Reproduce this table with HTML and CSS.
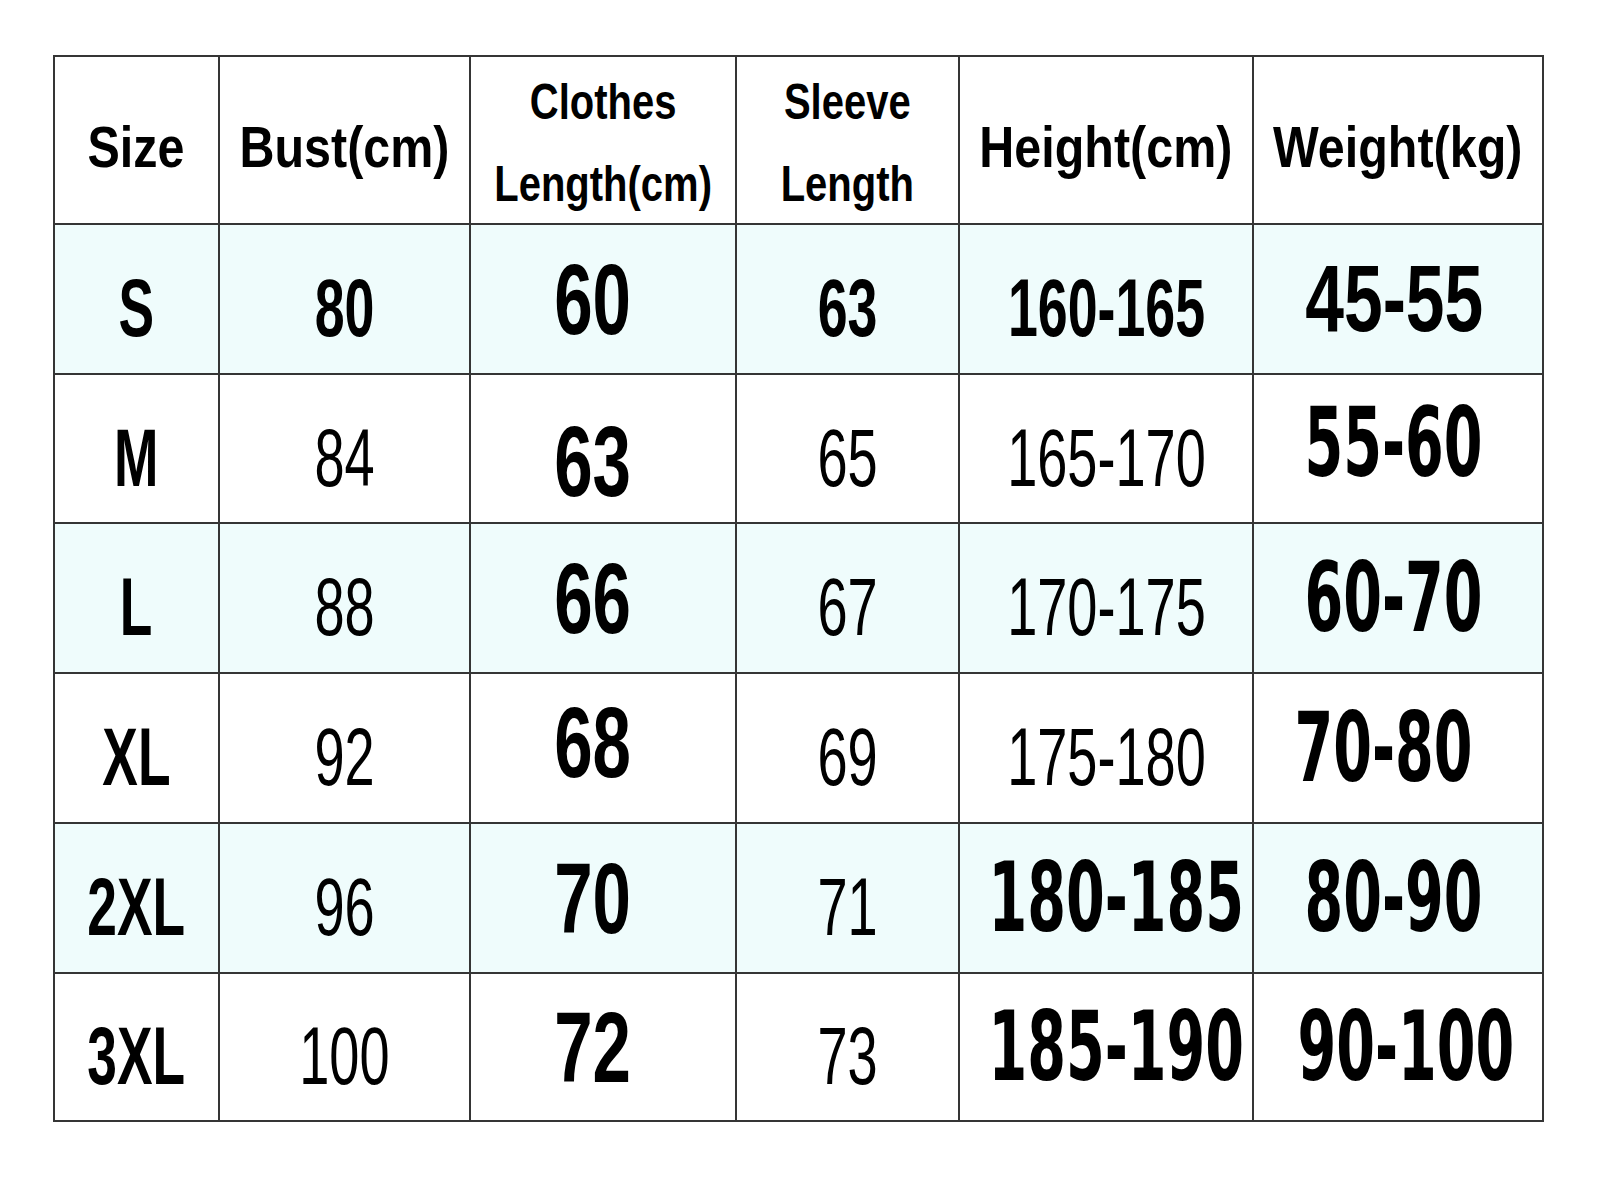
FILE: index.html
```html
<!DOCTYPE html>
<html>
<head>
<meta charset="utf-8">
<link rel="stylesheet" href="styles.css">
</head>
<body>
<div class="page">
  <div class="chart">
    <div class="cell head"><span class="h1">Size</span></div>
    <div class="cell head"><span class="h1">Bust(cm)</span></div>
    <div class="cell head2"><span class="h2">Clothes<br>Length(cm)</span></div>
    <div class="cell head2"><span class="h2">Sleeve<br>Length</span></div>
    <div class="cell head"><span class="h1">Height(cm)</span></div>
    <div class="cell head"><span class="h1">Weight(kg)</span></div>

    <div class="cell alt low"><span class="sz">S</span></div>
    <div class="cell alt low"><span class="nb">80</span></div>
    <div class="cell alt cl"><span class="big">60</span></div>
    <div class="cell alt low"><span class="nb">63</span></div>
    <div class="cell alt low"><span class="nb">160-165</span></div>
    <div class="cell alt wl"><span class="big w1">45-55</span></div>

    <div class="cell low"><span class="sz">M</span></div>
    <div class="cell low"><span class="nr">84</span></div>
    <div class="cell cl low2"><span class="big">63</span></div>
    <div class="cell low"><span class="nr">65</span></div>
    <div class="cell low"><span class="nr">165-170</span></div>
    <div class="cell up wl"><span class="dv">55-60</span></div>

    <div class="cell alt low"><span class="sz">L</span></div>
    <div class="cell alt low"><span class="nr">88</span></div>
    <div class="cell alt cl"><span class="big">66</span></div>
    <div class="cell alt low"><span class="nr">67</span></div>
    <div class="cell alt low"><span class="nr">170-175</span></div>
    <div class="cell alt wl"><span class="dv">60-70</span></div>

    <div class="cell low"><span class="sz">XL</span></div>
    <div class="cell low"><span class="nr">92</span></div>
    <div class="cell cl up"><span class="big">68</span></div>
    <div class="cell low"><span class="nr">69</span></div>
    <div class="cell low"><span class="nr">175-180</span></div>
    <div class="cell wl2"><span class="dv">70-80</span></div>

    <div class="cell alt low"><span class="sz">2XL</span></div>
    <div class="cell alt low"><span class="nr">96</span></div>
    <div class="cell alt cl"><span class="big">70</span></div>
    <div class="cell alt low"><span class="nr">71</span></div>
    <div class="cell alt"><span class="dv shift">180-185</span></div>
    <div class="cell alt wl"><span class="dv">80-90</span></div>

    <div class="cell low"><span class="sz">3XL</span></div>
    <div class="cell low"><span class="nr">100</span></div>
    <div class="cell cl"><span class="big">72</span></div>
    <div class="cell low"><span class="nr">73</span></div>
    <div class="cell"><span class="dv shift">185-190</span></div>
    <div class="cell wr"><span class="dv">90-100</span></div>
  </div>
</div>
</body>
</html>
```

FILE: styles.css
```css
html, body {
  margin: 0;
  padding: 0;
  background: #ffffff;
}

body {
  font-family: "Liberation Sans", Arial, sans-serif;
  color: #000;
}

.page {
  padding: 55px 0 0 53px;
}

.chart {
  display: grid;
  grid-template-columns: 165px 251px 266px 223px 294px 290px;
  grid-template-rows: 168px 150px 149px 150px 150px 150px 148px;
  width: max-content;
  border-left: 2px solid #353535;
  border-top: 2px solid #353535;
}

.cell {
  box-sizing: border-box;
  border-right: 2px solid #353535;
  border-bottom: 2px solid #353535;
  display: flex;
  align-items: center;
  justify-content: center;
  background: #ffffff;
  overflow: visible;
}

.cell.alt {
  background: #effcfc;
}

.cell.head {
  padding-top: 14px;
}

.cell.head2 {
  padding-top: 6px;
}

.cell.low {
  padding-top: 18px;
}

.cell.low2 {
  padding-top: 24px;
}

.cell.up {
  padding-bottom: 12px;
}

.cell.cl {
  padding-right: 20px;
}

.cell.wl {
  padding-right: 8px;
}

.cell.wl2 {
  padding-right: 28px;
}

.cell.wr {
  padding-left: 16px;
}

.cell span {
  display: inline-block;
  white-space: nowrap;
  line-height: 1;
  transform-origin: center center;
}

.h1 {
  font-weight: bold;
  font-size: 57px;
  transform: scaleX(0.85);
}

.h2 {
  font-weight: bold;
  font-size: 50px;
  line-height: 82px !important;
  text-align: center;
  transform: scaleX(0.8);
}

.sz {
  font-weight: bold;
  font-size: 82px;
  transform: scaleX(0.65);
}

.nr {
  font-weight: normal;
  font-size: 82px;
  transform: scaleX(0.66);
}

.nb {
  font-weight: bold;
  font-size: 82px;
  transform: scaleX(0.655);
}

.big {
  font-weight: bold;
  font-size: 100px;
  transform: scaleX(0.69);
}

.big.w1 {
  font-size: 94px;
  transform: scaleX(0.74);
}

.dv {
  font-family: "DejaVu Sans", sans-serif;
  font-weight: bold;
  font-size: 96px;
  transform: scaleX(0.58);
}

.dv.shift {
  position: relative;
  left: 10px;
}
```
